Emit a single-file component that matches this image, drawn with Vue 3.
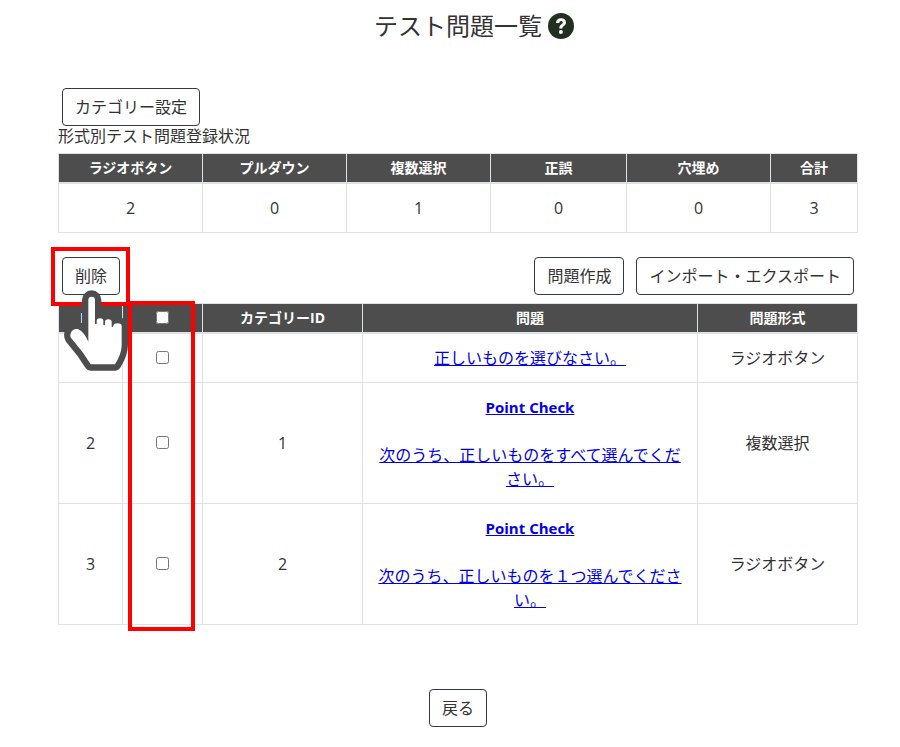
<script setup>
const summaryHeads = [
  { label: 'ラジオボタン', width: 144 },
  { label: 'プルダウン', width: 144 },
  { label: '複数選択', width: 144 },
  { label: '正誤', width: 136 },
  { label: '穴埋め', width: 144 },
  { label: '合計', width: 87 }
]
const summaryValues = [2, 0, 1, 0, 0, 3]

const rows = [
  { id: 1, category: '', title: '', text: '正しいものを選びなさい。', type: 'ラジオボタン' },
  { id: 2, category: 1, title: 'Point Check', text: '次のうち、正しいものをすべて選んでください。', type: '複数選択' },
  { id: 3, category: 2, title: 'Point Check', text: '次のうち、正しいものを１つ選んでください。', type: 'ラジオボタン' }
]
</script>

<template>
  <div class="page">
    <h1 class="title">
      <span>テスト問題一覧</span>
      <svg class="help" viewBox="0 0 26 26" width="26" height="26">
        <circle cx="13" cy="13" r="13" fill="#22301f" />
        <path d="M8 10c0-3 2.200-4.700 5.100-4.700 2.800 0 4.900 1.600 4.900 4.100 0 1.900-1.100 2.900-2.400 3.800-1 .7-1.200 1.100-1.200 2.200h-3.100c0-2 .6-2.900 1.900-3.800 1-.7 1.600-1.200 1.600-2 0-1-.7-1.500-1.700-1.500-1.100 0-1.800.7-1.800 1.900z" fill="#fff" />
        <circle cx="12.900" cy="19" r="2" fill="#fff" />
      </svg>
    </h1>

    <button class="btn first">カテゴリー設定</button>
    <div class="caption">形式別テスト問題登録状況</div>

    <table class="table summary">
      <colgroup>
        <col v-for="h in summaryHeads" :key="h.label" :style="{ width: h.width + 'px' }" />
      </colgroup>
      <thead>
        <tr>
          <th v-for="h in summaryHeads" :key="h.label">{{ h.label }}</th>
        </tr>
      </thead>
      <tbody>
        <tr>
          <td v-for="(v, i) in summaryValues" :key="i">{{ v }}</td>
        </tr>
      </tbody>
    </table>

    <div class="toolbar">
      <button class="btn">削除</button>
      <div class="toolbar-right">
        <button class="btn">問題作成</button>
        <button class="btn">インポート・エクスポート</button>
      </div>
    </div>

    <table class="table questions">
      <colgroup>
        <col style="width: 64px" />
        <col style="width: 80px" />
        <col style="width: 160px" />
        <col style="width: 335px" />
        <col style="width: 160px" />
      </colgroup>
      <thead>
        <tr>
          <th class="id-head">ID</th>
          <th><input type="checkbox" class="check" /></th>
          <th>カテゴリーID</th>
          <th>問題</th>
          <th>問題形式</th>
        </tr>
      </thead>
      <tbody>
        <tr v-for="row in rows" :key="row.id">
          <td>{{ row.id }}</td>
          <td><input type="checkbox" class="check" /></td>
          <td>{{ row.category }}</td>
          <td class="question" :class="{ plain: !row.title }">
            <template v-if="row.title">
              <a class="q-title" href="#">{{ row.title }}</a>
              <div class="spacer"></div>
            </template>
            <a href="#">{{ row.text }}</a>
          </td>
          <td>{{ row.type }}</td>
        </tr>
      </tbody>
    </table>

    <div class="back">
      <button class="btn">戻る</button>
    </div>

    <div class="mark mark-delete"></div>
    <div class="mark mark-checks"></div>
    <svg class="hand" viewBox="0 0 225 270" width="75" height="90">
      <path
        d="M85 170V45a10 10 0 0 1 20 0V116l3 2 2-2V108a10 8 0 0 1 20 0V120l3 1 2-2V111a10 8 0 0 1 20 0V125l3 1 2-2V123a12.500 8 0 0 1 25 0V180c0 20-8 38-20 58H92L68 202 34 160c-9-13 4-33 21-27 14 6 23 22 30 37z"
        fill="#fff"
        stroke="#4d4d4d"
        stroke-width="38"
        stroke-linejoin="round"
        paint-order="stroke"
      />
    </svg>
  </div>
</template>

<style scoped>
.page {
  position: relative;
  box-sizing: border-box;
  width: 900px;
  height: 747px;
  padding: 0 42px 0 58px;
  overflow: hidden;
  color: #333;
  font-family: "Open Sans", "Noto Sans CJK JP", sans-serif;
  font-size: 16px;
  line-height: 24px;
}

.title {
  display: flex;
  align-items: flex-start;
  justify-content: center;
  gap: 6px;
  margin: 0;
  padding: 8px 0 0 32px;
  height: 79px;
  box-sizing: border-box;
  font-size: 24px;
  font-weight: 400;
  line-height: 36px;
}

.help {
  margin-top: 5px;
}

.btn {
  box-sizing: border-box;
  height: 38px;
  padding: 0 12px;
  border: 1px solid #343a40;
  border-radius: 4px;
  background: #fff;
  color: #333;
  font: inherit;
}

.first {
  display: block;
  margin: 9px 0 0 4px;
}

.caption {
  height: 27px;
  line-height: 21px;
}

.table {
  width: 799px;
  border-collapse: collapse;
  table-layout: fixed;
  text-align: center;
}

.table th {
  height: 28px;
  padding: 0;
  border: 1px solid #dee2e6;
  border-bottom-width: 2px;
  background: #4d4d4d;
  color: #fff;
  font-size: 14px;
  font-weight: 700;
  line-height: 20px;
}

.table th.id-head {
  letter-spacing: 3px;
}

.table td {
  padding: 12px;
  border: 1px solid #dee2e6;
  vertical-align: middle;
}

.table td.plain {
  padding-top: 11px;
}

.summary td {
  height: 48px;
  padding: 0;
}

.toolbar {
  display: flex;
  justify-content: space-between;
  align-items: flex-start;
  margin-top: 24px;
  padding: 0 4px;
  height: 46px;
}

.toolbar-right {
  display: flex;
  gap: 12px;
}

.check {
  display: block;
  width: 13px;
  height: 13px;
  margin: -2px auto 0;
}

.question a {
  color: #00e;
}

.q-title {
  font-size: 15px;
  font-weight: 700;
}

.spacer {
  height: 24px;
}

.back {
  display: flex;
  justify-content: center;
  margin-top: 64px;
}

.mark {
  position: absolute;
  box-sizing: border-box;
  border: 4px solid #f00;
}

.mark-delete {
  left: 51px;
  top: 247px;
  width: 79px;
  height: 59px;
}

.mark-checks {
  left: 128px;
  top: 301px;
  width: 67px;
  height: 330px;
}

.hand {
  position: absolute;
  left: 60px;
  top: 285px;
}
</style>

<style>
body {
  background: #fff;
}
</style>
